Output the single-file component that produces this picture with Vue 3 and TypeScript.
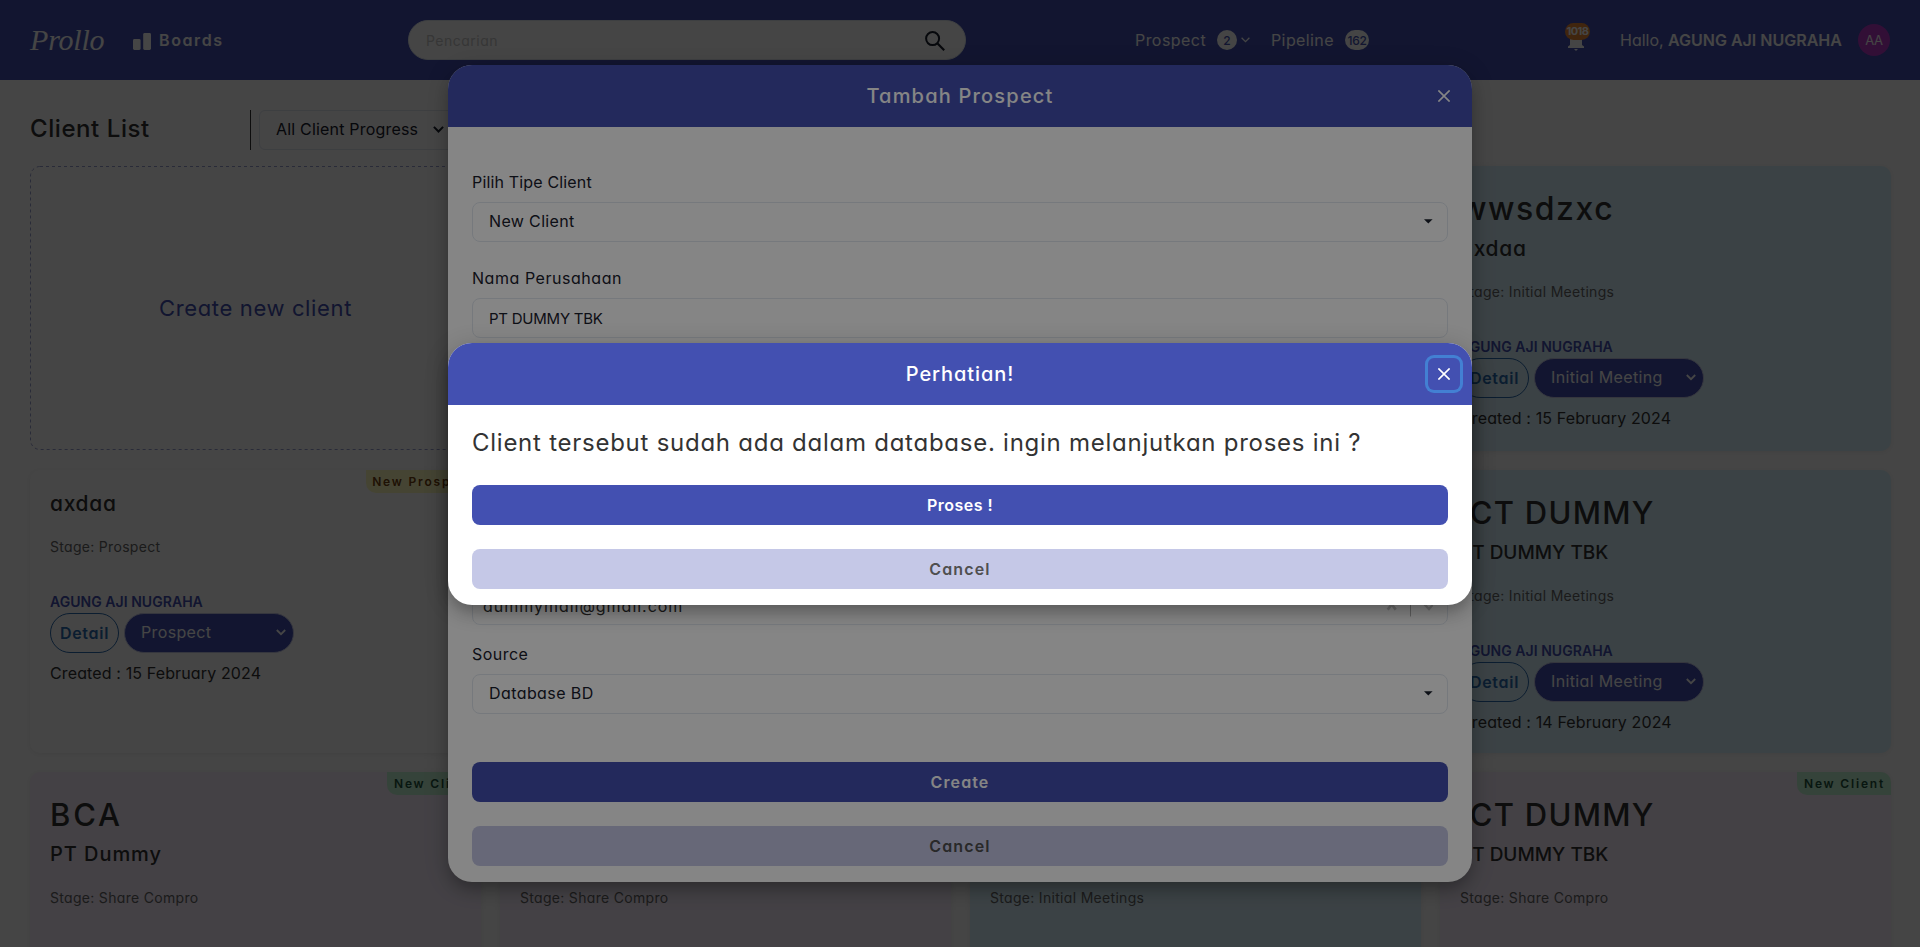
<script setup lang="ts">
type Tone = 'white' | 'cyan' | 'purple'

interface ClientCard {
  col: number
  row: number
  tone: Tone
  title?: string
  upper?: boolean
  company?: string
  stage: string
  status: string
  created?: string
  badge?: string
  badgeTone?: 'yellow' | 'green'
}

const owner = 'AGUNG AJI NUGRAHA'

const cards: ClientCard[] = [
  { col: 4, row: 1, tone: 'cyan', title: 'wwsdzxc', company: 'axdaa', stage: 'Initial Meetings', status: 'Initial Meeting', created: '15 February 2024' },
  { col: 1, row: 2, tone: 'white', company: 'axdaa', stage: 'Prospect', status: 'Prospect', created: '15 February 2024', badge: 'New Prospect', badgeTone: 'yellow' },
  { col: 4, row: 2, tone: 'cyan', title: 'ICT DUMMY', upper: true, company: 'PT DUMMY TBK', stage: 'Initial Meetings', status: 'Initial Meeting', created: '14 February 2024' },
  { col: 1, row: 3, tone: 'purple', title: 'BCA', upper: true, company: 'PT Dummy', stage: 'Share Compro', status: '', badge: 'New Client', badgeTone: 'green' },
  { col: 2, row: 3, tone: 'purple', title: '\u00a0', company: '\u00a0', stage: 'Share Compro', status: '' },
  { col: 3, row: 3, tone: 'cyan', title: '\u00a0', company: '\u00a0', stage: 'Initial Meetings', status: '' },
  { col: 4, row: 3, tone: 'purple', title: 'ICT DUMMY', upper: true, company: 'PT DUMMY TBK', stage: 'Share Compro', status: '', badge: 'New Client', badgeTone: 'green' },
]

function isUpper(text?: string): boolean {
  return !!text && text.trim() !== '' && text === text.toUpperCase()
}
</script>

<template>
  <div class="screen">
    <header class="nav">
      <div class="brand">
        <span class="logo">Prollo</span>
        <svg class="boards-icon" width="18" height="17" viewBox="0 0 18 17">
          <rect x="0" y="6" width="7.6" height="11" rx="1.4" />
          <rect x="10.2" y="0" width="7.8" height="17" rx="1.4" />
        </svg>
        <span class="boards">Boards</span>
      </div>
      <div class="search">
        <span class="placeholder">Pencarian</span>
        <svg width="20" height="20" viewBox="0 0 20 20" fill="none" stroke="#1a202c" stroke-width="2">
          <circle cx="7.6" cy="7.6" r="6.5" />
          <path d="M12.3 12.3 L19.2 19.2" stroke-width="2.2" />
        </svg>
      </div>
      <div class="links">
        <span class="link prospect">Prospect</span>
        <span class="count round">2</span>
        <svg class="tiny-chev" width="9" height="6" viewBox="0 0 9 6" fill="none" stroke="#fff" stroke-width="1.3">
          <path d="M0.6 0.8 L4.5 4.7 L8.4 0.8" />
        </svg>
        <span class="link pipeline">Pipeline</span>
        <span class="count wide">162</span>
      </div>
      <div class="account">
        <div class="bell">
          <svg width="18" height="20" viewBox="0 0 18 20" fill="#fff">
            <path d="M9 0 C5 1 3 3.4 3 7 V14 L1 15.4 V17 H17 V15.4 L15 14 V7 C15 3.4 13 1 9 0 Z" />
            <path d="M7 18 H11 L9 20 Z" />
          </svg>
          <span class="alerts">1018</span>
        </div>
        <span class="hello">Hallo,</span>
        <span class="user">{{ owner }}</span>
        <span class="avatar">AA</span>
      </div>
    </header>

    <section class="toolbar">
      <h1 class="heading">Client List</h1>
      <div class="filter">
        <span class="filter-text">All Client Progress</span>
        <svg width="11" height="7" viewBox="0 0 11 7" fill="none" stroke="#1a202c" stroke-width="2">
          <path d="M0.9 0.9 L5.5 5.5 L10.1 0.9" />
        </svg>
      </div>
    </section>

    <main class="board">
      <div class="create">
        <svg class="dashes" width="451" height="284">
          <rect x="0.5" y="0.5" width="450" height="283" rx="9.5" fill="none" stroke="#9aa0cf" stroke-dasharray="3 3" />
        </svg>
        <span>Create new client</span>
      </div>
      <article
        v-for="(card, i) in cards"
        :key="i"
        class="card"
        :class="[card.tone, 'col' + card.col, 'row' + card.row]"
      >
        <span v-if="card.badge" class="badge" :class="card.badgeTone">{{ card.badge }}</span>
        <h2 v-if="card.title" class="title" :class="{ upper: card.upper, short: card.title === 'BCA' }">{{ card.title }}</h2>
        <p class="company" :class="{ upper: isUpper(card.company), low: card.company === 'axdaa' }">{{ card.company }}</p>
        <p class="stage">Stage: {{ card.stage }}</p>
        <template v-if="card.created">
          <p class="owner">{{ owner }}</p>
          <div class="actions">
            <button class="detail">Detail</button>
            <div class="status">
              <span>{{ card.status }}</span>
              <svg width="10" height="7" viewBox="0 0 10 7" fill="none" stroke="#fff" stroke-width="1.8">
                <path d="M0.8 1 L5 5.2 L9.2 1" />
              </svg>
            </div>
          </div>
          <p class="created">Created : {{ card.created }}</p>
        </template>
      </article>
    </main>

    <div class="overlay">
      <section class="modal form">
        <header class="modal-head">
          <span class="t-form">Tambah Prospect</span>
          <button class="close">
            <svg width="12" height="12" viewBox="0 0 12 12" stroke="#fff" stroke-width="1.6"><path d="M0.4 0.4 L11.6 11.6 M11.6 0.4 L0.4 11.6" /></svg>
          </button>
        </header>
        <div class="form-body">
          <label class="label l1">Pilih Tipe Client</label>
          <div class="field">
            <span class="v1">New Client</span>
            <svg width="9" height="5" viewBox="0 0 9 5"><path d="M0 0.2 H8.6 L4.3 4.4 Z" fill="#1a202c" /></svg>
          </div>
          <label class="label l2">Nama Perusahaan</label>
          <div class="field"><span class="v2">PT DUMMY TBK</span></div>
          <div class="field email">
            <span class="v3">dummymail@gmail.com</span>
            <svg width="48" height="24" viewBox="0 0 48 24" fill="none">
              <path d="M2.7 6 L10.7 16.6 M10.7 6 L2.7 16.6" stroke="#ccc" stroke-width="2.6" />
              <path d="M25.5 1 V23.5" stroke="#b5b5b5" />
              <path d="M39.5 11.5 L44 16 L48 11.5" stroke="#ccc" stroke-width="2.4" />
            </svg>
          </div>
          <label class="label l3">Source</label>
          <div class="field">
            <span class="v4">Database BD</span>
            <svg width="9" height="5" viewBox="0 0 9 5"><path d="M0 0.2 H8.6 L4.3 4.4 Z" fill="#1a202c" /></svg>
          </div>
          <button class="btn primary create-btn">Create</button>
          <button class="btn secondary">Cancel</button>
        </div>
      </section>
    </div>

    <div class="overlay">
      <section class="modal confirm">
        <header class="modal-head">
          <span class="t-confirm">Perhatian!</span>
          <button class="close focused">
            <svg width="12" height="12" viewBox="0 0 12 12" stroke="#fff" stroke-width="1.6"><path d="M0.4 0.4 L11.6 11.6 M11.6 0.4 L0.4 11.6" /></svg>
          </button>
        </header>
        <div class="confirm-body">
          <p class="message">Client tersebut sudah ada dalam database. ingin melanjutkan proses ini ?</p>
          <button class="btn primary proses">Proses !</button>
          <button class="btn secondary">Cancel</button>
        </div>
      </section>
    </div>
  </div>
</template>

<style>
body {
  margin: 0;
  background: #fff;
  overflow: hidden;
}
</style>

<style scoped>
* {
  box-sizing: border-box;
}
.screen {
  position: relative;
  width: 1920px;
  height: 947px;
  overflow: hidden;
  background: #fff;
  font-family: Inter, 'Noto Sans', sans-serif;
  font-feature-settings: 'cv11';
  font-size: 16px;
  line-height: 24px;
  color: #333;
  white-space: nowrap;
}
button {
  font: inherit;
  font-feature-settings: inherit;
  padding: 0;
  border: 0;
  background: none;
}
h1, h2, p {
  margin: 0;
}

/* navigation */
.nav {
  display: grid;
  grid-template-columns: 378px 558px 169px auto 1fr;
  align-items: center;
  height: 80px;
  padding: 0 30px;
  background: #4350b1;
  color: #fff;
}
.brand {
  display: flex;
  align-items: center;
}
.logo {
  width: 76px;
  font-family: 'Liberation Serif', serif;
  font-style: italic;
  font-size: 30px;
  line-height: 40px;
  letter-spacing: -0.2px;
}
.boards-icon {
  margin: 2px 8px 0 27px;
  fill: #fff;
}
.boards {
  font-weight: 600;
  letter-spacing: 0.1em;
}
.search {
  display: flex;
  align-items: center;
  justify-content: space-between;
  height: 40px;
  padding: 1px 20px 0 17px;
  border: 1px solid #e2e8f0;
  border-radius: 20px;
  background: #fff;
}
.placeholder {
  font-size: 14px;
  letter-spacing: 0.035em;
  color: #c8c8c8;
}
.links {
  grid-column: 4;
  display: flex;
  align-items: center;
}
.prospect { letter-spacing: 0.028em; width: 82px; }
.pipeline { letter-spacing: 0.025em; width: 74px; }
.count {
  height: 20px;
  line-height: 21px;
  border-radius: 10px;
  background: #fff;
  color: #4350b1;
  font-size: 12px;
  font-weight: 500;
  text-align: center;
}
.round { width: 20px; }
.wide { width: 24px; letter-spacing: -0.02em; }
.tiny-chev { margin: 0 21px 0 4px; }
.account {
  display: flex;
  align-items: center;
  justify-content: flex-end;
}
.bell {
  position: relative;
  width: 18px;
  height: 20px;
  margin: 2px 35px 0 0;
}
.bell svg { display: block; }
.alerts {
  position: absolute;
  left: -2px;
  top: -8px;
  width: 25px;
  height: 17px;
  border-radius: 9px;
  background: #ed8936;
  font-size: 11px;
  font-weight: 700;
  line-height: 17px;
  text-align: center;
  letter-spacing: -0.045em;
}
.hello { width: 48px; }
.user { width: 174px; font-weight: 600; }
.avatar {
  width: 32px;
  height: 32px;
  margin-left: 16px;
  border-radius: 50%;
  background: #b83bc8;
  font-size: 13px;
  line-height: 33px;
  text-align: center;
  letter-spacing: -0.03em;
}

/* toolbar */
.toolbar {
  display: flex;
  align-items: center;
  height: 86px;
  padding: 14px 30px 0;
}
.heading {
  width: 220px;
  margin-top: -2px;
  font-size: 24px;
  font-weight: 500;
  line-height: 36px;
  letter-spacing: 0.024em;
}
.toolbar::before {
  content: '';
  order: 1;
  width: 1px;
  height: 40px;
  margin: 0 8px 0 0;
  background: #333;
}
.filter {
  order: 2;
  display: flex;
  align-items: center;
  width: 240px;
  height: 40px;
  padding: 0 0 2px 16px;
  border: 1px solid #e2e8f0;
  border-radius: 6px;
  color: #1a202c;
}
.filter-text { width: 157px; letter-spacing: 0.012em; }

/* board */
.board {
  display: grid;
  grid-template-columns: repeat(4, 451px);
  grid-template-rows: 285px 283px 285px;
  gap: 19px;
  padding: 0 30px;
}
.create {
  position: relative;
  grid-area: 1 / 1;
  display: flex;
  align-items: center;
  justify-content: center;
  height: 284px;
  font-size: 22px;
  letter-spacing: 0.029em;
  color: #4350b1;
}
.dashes {
  position: absolute;
  inset: 0;
}
.card {
  position: relative;
  padding: 18px 20px;
  border-radius: 10px;
  box-shadow: 0 1px 6px rgba(0, 0, 0, 0.08);
}
.white { background: #fff; }
.cyan { background: #daf4ff; }
.purple { background: #faf0ff; }
.col1 { grid-column: 1; }
.col2 { grid-column: 2; }
.col3 { grid-column: 3; }
.col4 { grid-column: 4; }
.row1 { grid-row: 1; }
.row2 { grid-row: 2; }
.row3 { grid-row: 3; }
.badge {
  position: absolute;
  top: 0;
  right: 0;
  height: 23px;
  padding: 0 6px 0 6.5px;
  border-radius: 0 10px 0 10px;
  font-size: 12px;
  font-weight: 600;
  line-height: 23px;
  letter-spacing: 0.151em;
}
.badge.yellow { background: #fefcbf; color: #744210; }
.badge.green { background: #c6f6d5; color: #22543d; }
.title {
  height: 49px;
  font-size: 32px;
  font-weight: 500;
  line-height: 49px;
  letter-spacing: 0.047em;
}
.title.upper { font-size: 31px; letter-spacing: 0.041em; }
.title.short { letter-spacing: 0.09em; }
.company {
  height: 30px;
  font-size: 20px;
  font-weight: 500;
  line-height: 31px;
  letter-spacing: 0.047em;
}
.company.low { font-size: 21px; letter-spacing: 0.032em; }
.company.upper { font-size: 19px; letter-spacing: 0; }
.stage {
  margin-top: 18px;
  font-size: 14px;
  line-height: 21px;
  letter-spacing: 0.022em;
  color: #666;
}
.owner {
  margin-top: 34px;
  font-size: 14px;
  font-weight: 600;
  line-height: 21px;
  letter-spacing: 0.003em;
  color: #4350b1;
}
.actions {
  display: flex;
  align-items: flex-start;
  gap: 5px;
  margin-top: 1px;
}
.detail {
  width: 69px;
  height: 40px;
  border: 1px solid #2b6cb0;
  border-radius: 20px;
  color: #2b6cb0;
  font-weight: 600;
  letter-spacing: 0.045em;
}
.status {
  display: flex;
  align-items: center;
  justify-content: space-between;
  width: 170px;
  height: 40px;
  padding: 0 7px 2px 16px;
  border: 1px solid #c5c8e7;
  border-radius: 20px;
  background: #4350b1;
  color: #fff;
  letter-spacing: 0.022em;
}
.created {
  margin-top: 8px;
  letter-spacing: 0.008em;
}

/* dialogs */
.overlay {
  position: absolute;
  inset: 0;
  display: flex;
  flex-direction: column;
  align-items: center;
  background: rgba(0, 0, 0, 0.48);
}
.modal {
  width: 1024px;
  border-radius: 24px;
  overflow: hidden;
  background: #fff;
  box-shadow: 0 10px 15px -3px rgba(0, 0, 0, 0.2), 0 4px 24px rgba(0, 0, 0, 0.2);
}
.form { margin-top: 65px; height: 817px; }
.confirm { margin-top: 343px; height: 262px; }
.modal-head {
  position: relative;
  display: flex;
  align-items: center;
  justify-content: center;
  height: 62px;
  background: #4350b1;
  color: #fff;
  font-size: 20px;
  font-weight: 500;
}
.t-form { letter-spacing: 0.06em; }
.t-confirm { letter-spacing: 0.046em; }
.close {
  position: absolute;
  top: 15px;
  right: 12px;
  display: flex;
  align-items: center;
  justify-content: center;
  width: 32px;
  height: 32px;
  border-radius: 6px;
}
.focused { box-shadow: 0 0 0 3px #4380d3; }
.form-body {
  display: flex;
  flex-direction: column;
  padding: 43px 24px 0;
  color: #1a202c;
}
.label { height: 24px; }
.field {
  display: flex;
  align-items: center;
  justify-content: space-between;
  height: 40px;
  margin-top: 8px;
  padding: 0 14px 2px 16px;
  border: 1px solid #e2e8f0;
  border-radius: 8px;
}
.l1 { letter-spacing: 0.01em; }
.l2 { margin-top: 24px; letter-spacing: 0.034em; }
.l3 { margin-top: 17px; letter-spacing: 0.03em; }
.v1 { letter-spacing: 0.022em; }
.v2 { font-size: 15px; letter-spacing: -0.016em; padding-top: 4px; }
.v3 { letter-spacing: 0.061em; padding-top: 2px; }
.v4 { letter-spacing: 0.026em; }
.field.email {
  margin-top: 247px;
  padding: 0 14px 0 10px;
  color: #333;
}
.btn {
  flex: none;
  width: 100%;
  height: 40px;
  padding-bottom: 1px;
  border-radius: 8px;
  font-weight: 600;
  letter-spacing: 0.07em;
}
.primary { background: #4350b1; color: #fff; }
.proses { letter-spacing: 0.03em; margin-top: 20px; }
.secondary { margin-top: 24px; background: #c5c8e7; color: #4f4f4f; }
.create-btn { margin-top: 48px; }
.confirm-body {
  display: flex;
  flex-direction: column;
  padding: 20px 24px 0;
  font-size: 16px;
}
.message {
  height: 40px;
  font-size: 24px;
  line-height: 36px;
  letter-spacing: 0.031em;
}
</style>
